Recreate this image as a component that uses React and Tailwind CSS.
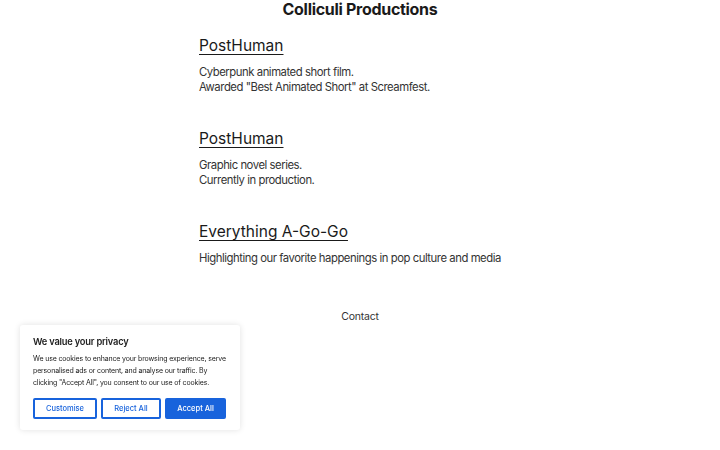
const projects = [
  {
    title: 'PostHuman',
    lines: ['Cyberpunk animated short film.', 'Awarded "Best Animated Short" at Screamfest.'],
  },
  {
    title: 'PostHuman',
    lines: ['Graphic novel series.', 'Currently in production.'],
  },
  {
    title: 'Everything A-Go-Go',
    lines: ['Highlighting our favorite happenings in pop culture and media'],
  },
];

const CookieBanner = () => (
  <div className="fixed left-[20px] bottom-[20px] w-[220px] bg-white rounded-[3px] shadow-[0_0_6px_rgba(0,0,0,0.12)] px-[13px] pt-[10px] pb-[11px]">
    <p className="text-[9.3px] font-semibold tracking-[-0.2px] text-[#212121] leading-[14px] mb-[4px]">We value your privacy</p>
    <p className="text-[7px] tracking-[-0.15px] leading-[12px] text-[#212121] whitespace-nowrap">
      We use cookies to enhance your browsing experience, serve
      <br />
      personalised ads or content, and analyse our traffic. By
      <br />
      clicking "Accept All", you consent to our use of cookies.
    </p>
    <div className="flex gap-[4px] mt-[9px]">
      <button className="w-[64px] h-[21px] border-2 border-[#1863dc] rounded-[2px] text-[7.5px] font-medium text-[#1863dc] bg-white">Customise</button>
      <button className="w-[60px] h-[21px] border-2 border-[#1863dc] rounded-[2px] text-[7.5px] font-medium text-[#1863dc] bg-white">Reject All</button>
      <button className="w-[61px] h-[21px] border-2 border-[#1863dc] rounded-[2px] text-[7.5px] font-medium text-white bg-[#1863dc]">Accept All</button>
    </div>
  </div>
);

export default function App() {
  return (
    <div className="min-h-screen bg-white text-[#1a1a1a] font-['Inter',sans-serif]">
      <h1 className="text-center text-[16px] font-bold tracking-[-0.3px] leading-[20px] -mt-[1px]">Colliculi Productions</h1>

      <div className="w-[322px] mx-auto pt-[16px]">
        {projects.map((p, i) => (
          <div key={i} className="mb-[33px]">
            <a href="#" className="block text-[15.5px] leading-[22px] underline underline-offset-[3px] decoration-[1px] text-[#1a1a1a]">
              {p.title}
            </a>
            <div className="mt-[8px] text-[11.3px] tracking-[-0.45px] leading-[15px] text-[#333] whitespace-nowrap">
              {p.lines.map((l) => (
                <div key={l}>{l}</div>
              ))}
            </div>
          </div>
        ))}
      </div>

      <p className="text-center text-[10.5px] tracking-[-0.2px] leading-[15px] text-[#333] mt-[43px]">Contact</p>

      <CookieBanner />
    </div>
  );
}
